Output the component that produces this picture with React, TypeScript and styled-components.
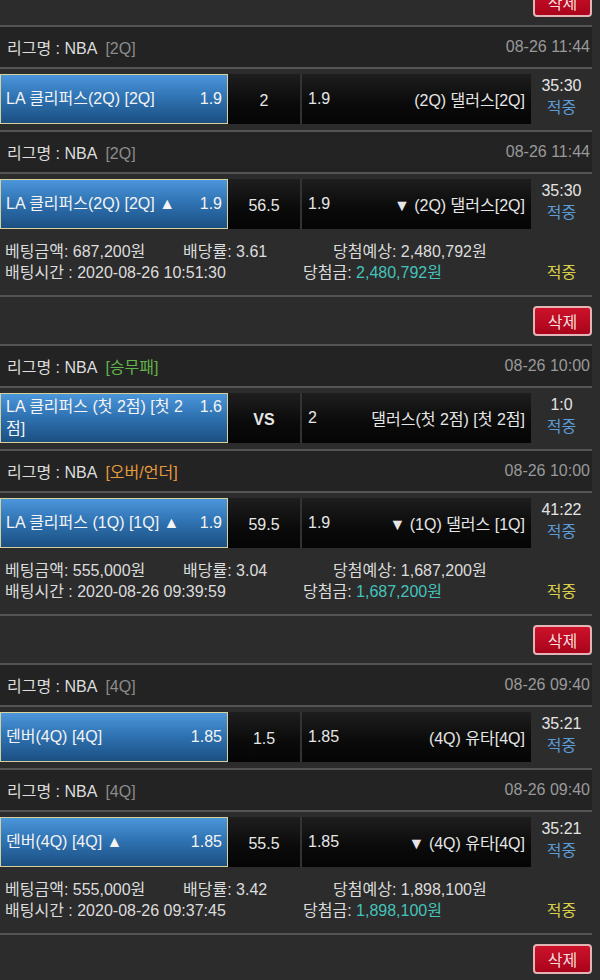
import React from 'react'
import styled, { createGlobalStyle } from 'styled-components'

const GlobalStyle = createGlobalStyle`
  * { box-sizing: border-box; }
  html, body {
    margin: 0;
    padding: 0;
    background: #2c2c2c;
  }
  body {
    font-family: "Liberation Sans", "Noto Sans CJK KR", sans-serif;
    font-size: 16px;
    color: #dcdcdc;
    font-feature-settings: "palt";
    overflow: hidden;
  }
`

const Page = styled.div`
  width: 592px;
  margin-top: -22px;
`

const DeleteBar = styled.div`
  height: 49px;
  padding-top: 9px;
  display: flex;
  justify-content: flex-end;
  align-items: flex-start;
  border-bottom: 2px solid #545454;
`

const DeleteButton = styled.button`
  width: 59px;
  height: 30px;
  padding: 0;
  border: 2px solid #e3b4b6;
  border-radius: 4px;
  background: linear-gradient(to bottom, #cc1229 0%, #a9041b 100%);
  color: #f5dcdc;
  font-family: inherit;
  font-size: 16px;
  font-feature-settings: "palt";
`

const LeagueHeader = styled.div`
  height: 42px;
  padding: 0 2px 0 7px;
  display: flex;
  align-items: center;
  justify-content: space-between;
  background: #232323;
  border-bottom: 2px solid #545454;
`

const LeagueName = styled.span`
  color: #dedede;
`

const Tag = styled.span<{ $color: string }>`
  margin-left: 8px;
  color: ${p => p.$color};
`

const GameDate = styled.span`
  color: #999;
`

const MatchRow = styled.div<{ $divider: boolean }>`
  display: grid;
  grid-template-columns: 228px 74px 229px 1fr;
  padding: 5px 0 6px;
  border-bottom: ${p => (p.$divider ? '2px solid #545454' : 'none')};
`

const HomeCell = styled.div`
  min-height: 50px;
  padding: 0 5px;
  display: flex;
  align-items: center;
  border: 1px solid #d6d09a;
  background: linear-gradient(to bottom, #4c96db 0%, #3074b4 45%, #1b4f82 100%);
  color: #f4f4f4;
  line-height: 22px;
`

const HomeText = styled.div`
  width: 100%;
`

const HomeOdds = styled.span`
  float: right;
  margin-left: 8px;
`

const DarkCell = styled.div`
  background: linear-gradient(to bottom, #1e1e1e 0%, #0a0a0a 60%, #050505 100%);
`

const LineCell = styled(DarkCell)<{ $bold: boolean }>`
  display: flex;
  align-items: center;
  justify-content: center;
  padding-top: 3px;
  border-right: 2px solid #333;
  color: #e6e6e6;
  font-weight: ${p => (p.$bold ? 700 : 400)};
`

const AwayCell = styled(DarkCell)`
  display: flex;
  align-items: center;
  justify-content: space-between;
  padding: 0 6px;
  color: #e6e6e6;
`

const StatusCell = styled.div`
  display: flex;
  flex-direction: column;
  align-items: center;
  justify-content: center;
  padding-bottom: 4px;
  line-height: 22px;
`

const Score = styled.span`
  color: #e4e4e4;
`

const Hit = styled.span`
  color: #5b9bd6;
`

const Details = styled.div`
  padding: 6px 0 12px 5px;
  border-bottom: 2px solid #545454;
  line-height: 21px;
`

const DetailLine = styled.div<{ $cols: string }>`
  display: grid;
  grid-template-columns: ${p => p.$cols};
  white-space: nowrap;
`

const Win = styled.span`
  color: #45c2bb;
`

const Result = styled.span`
  text-align: center;
  color: #dbcf4a;
`

type Leg = {
  tag: string
  tagColor: string
  date: string
  home: string
  homeOdds: string
  line: string
  bold?: boolean
  awayOdds: string
  away: string
  score: string
}

type Bet = {
  legs: Leg[]
  amount: string
  rate: string
  expected: string
  time: string
  won: string
}

const GRAY = '#8c8c8c'
const GREEN = '#62b54a'
const ORANGE = '#e59a3c'

const bets: Bet[] = [
  {
    legs: [
      { tag: '[2Q]', tagColor: GRAY, date: '08-26 11:44', home: 'LA 클리퍼스(2Q) [2Q]', homeOdds: '1.9', line: '2', awayOdds: '1.9', away: '(2Q) 댈러스[2Q]', score: '35:30' },
      { tag: '[2Q]', tagColor: GRAY, date: '08-26 11:44', home: 'LA 클리퍼스(2Q) [2Q] ▲', homeOdds: '1.9', line: '56.5', awayOdds: '1.9', away: '▼ (2Q) 댈러스[2Q]', score: '35:30' },
    ],
    amount: '687,200원',
    rate: '3.61',
    expected: '2,480,792원',
    time: '2020-08-26 10:51:30',
    won: '2,480,792원',
  },
  {
    legs: [
      { tag: '[승무패]', tagColor: GREEN, date: '08-26 10:00', home: 'LA 클리퍼스 (첫 2점) [첫 2점]', homeOdds: '1.6', line: 'VS', bold: true, awayOdds: '2', away: '댈러스(첫 2점) [첫 2점]', score: '1:0' },
      { tag: '[오버/언더]', tagColor: ORANGE, date: '08-26 10:00', home: 'LA 클리퍼스 (1Q) [1Q] ▲', homeOdds: '1.9', line: '59.5', awayOdds: '1.9', away: '▼ (1Q) 댈러스 [1Q]', score: '41:22' },
    ],
    amount: '555,000원',
    rate: '3.04',
    expected: '1,687,200원',
    time: '2020-08-26 09:39:59',
    won: '1,687,200원',
  },
  {
    legs: [
      { tag: '[4Q]', tagColor: GRAY, date: '08-26 09:40', home: '덴버(4Q) [4Q]', homeOdds: '1.85', line: '1.5', awayOdds: '1.85', away: '(4Q) 유타[4Q]', score: '35:21' },
      { tag: '[4Q]', tagColor: GRAY, date: '08-26 09:40', home: '덴버(4Q) [4Q] ▲', homeOdds: '1.85', line: '55.5', awayOdds: '1.85', away: '▼ (4Q) 유타[4Q]', score: '35:21' },
    ],
    amount: '555,000원',
    rate: '3.42',
    expected: '1,898,100원',
    time: '2020-08-26 09:37:45',
    won: '1,898,100원',
  },
]

function LegRows({ leg, divider }: { leg: Leg; divider: boolean }) {
  return (
    <>
      <LeagueHeader>
        <LeagueName>
          리그명 : NBA
          <Tag $color={leg.tagColor}>{leg.tag}</Tag>
        </LeagueName>
        <GameDate>{leg.date}</GameDate>
      </LeagueHeader>
      <MatchRow $divider={divider}>
        <HomeCell>
          <HomeText>
            <HomeOdds>{leg.homeOdds}</HomeOdds>
            {leg.home}
          </HomeText>
        </HomeCell>
        <LineCell $bold={!!leg.bold}>{leg.line}</LineCell>
        <AwayCell>
          <span>{leg.awayOdds}</span>
          <span>{leg.away}</span>
        </AwayCell>
        <StatusCell>
          <Score>{leg.score}</Score>
          <Hit>적중</Hit>
        </StatusCell>
      </MatchRow>
    </>
  )
}

export default function App() {
  return (
    <>
      <GlobalStyle />
      <Page>
        <DeleteBar>
          <DeleteButton>삭제</DeleteButton>
        </DeleteBar>
        {bets.map((bet, i) => (
          <React.Fragment key={i}>
            {bet.legs.map((leg, j) => (
              <LegRows key={j} leg={leg} divider={j < bet.legs.length - 1} />
            ))}
            <Details>
              <DetailLine $cols="178px 150px 1fr">
                <span>베팅금액: {bet.amount}</span>
                <span>배당률: {bet.rate}</span>
                <span>당첨예상: {bet.expected}</span>
              </DetailLine>
              <DetailLine $cols="298px 1fr 61px">
                <span>배팅시간 : {bet.time}</span>
                <span>
                  당첨금: <Win>{bet.won}</Win>
                </span>
                <Result>적중</Result>
              </DetailLine>
            </Details>
            <DeleteBar>
              <DeleteButton>삭제</DeleteButton>
            </DeleteBar>
          </React.Fragment>
        ))}
      </Page>
    </>
  )
}
